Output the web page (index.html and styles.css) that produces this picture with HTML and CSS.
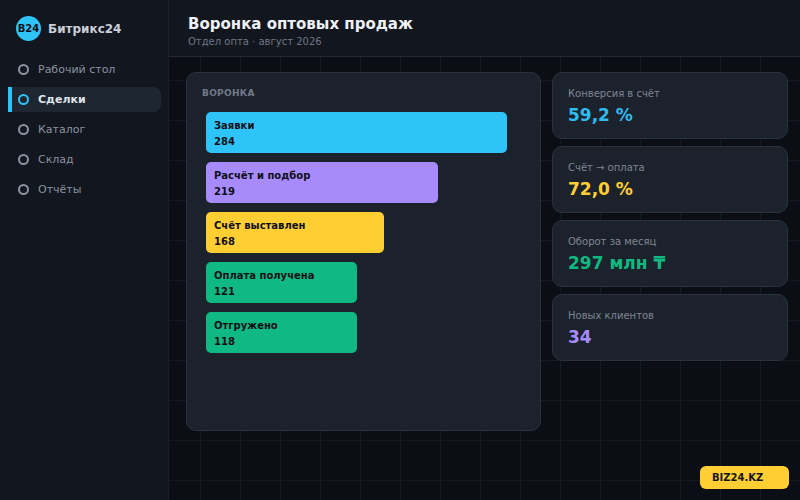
FILE: index.html
```html
<!DOCTYPE html>
<html lang="ru">
<head>
<meta charset="utf-8">
<title>Воронка оптовых продаж</title>
<link rel="stylesheet" href="styles.css">
</head>
<body>
<div class="app">
  <aside class="sidebar">
    <div class="brand"><span class="logo">B24</span><span class="brand-name">Битрикс24</span></div>
    <nav class="nav">
      <a class="nav-item"><i class="dot"></i>Рабочий стол</a>
      <a class="nav-item active"><i class="dot"></i>Сделки</a>
      <a class="nav-item"><i class="dot"></i>Каталог</a>
      <a class="nav-item"><i class="dot"></i>Склад</a>
      <a class="nav-item"><i class="dot"></i>Отчёты</a>
    </nav>
  </aside>
  <main class="main">
    <header class="header">
      <h1>Воронка оптовых продаж</h1>
      <p>Отдел опта · август 2026</p>
    </header>
    <div class="content">
      <section class="panel">
        <h2>ВОРОНКА</h2>
        <div class="bars">
          <div class="bar blue w1"><b>Заявки</b><b>284</b></div>
          <div class="bar violet w2"><b>Расчёт и подбор</b><b>219</b></div>
          <div class="bar yellow w3"><b>Счёт выставлен</b><b>168</b></div>
          <div class="bar green w4"><b>Оплата получена</b><b>121</b></div>
          <div class="bar green w4"><b>Отгружено</b><b>118</b></div>
        </div>
      </section>
      <section class="stats">
        <div class="stat"><span>Конверсия в счёт</span><strong class="c-blue">59,2 %</strong></div>
        <div class="stat"><span>Счёт → оплата</span><strong class="c-yellow">72,0 %</strong></div>
        <div class="stat"><span>Оборот за месяц</span><strong class="c-green">297 млн ₸</strong></div>
        <div class="stat"><span>Новых клиентов</span><strong class="c-violet">34</strong></div>
      </section>
    </div>
  </main>
</div>
<div class="badge">BIZ24.KZ</div>
</body>
</html>
```
FILE: styles.css
```css
* { box-sizing: border-box; }
html, body { margin: 0; height: 100%; }
body {
  width: 800px; height: 500px; overflow: hidden;
  font-family: "DejaVu Sans", sans-serif;
  background-color: #0b0e14;
  background-image:
    linear-gradient(#141922 1px, transparent 1px),
    linear-gradient(90deg, #141922 1px, transparent 1px);
  background-size: 40px 40px;
  color: #e6e9ef;
}
.app { display: flex; height: 500px; }
.sidebar {
  width: 169px; flex: none;
  background: #12161f;
  border-right: 1px solid #1a1f2a;
  padding: 16px 7px 0 8px;
}
.brand { display: flex; align-items: center; gap: 7px; height: 25px; margin-left: 8px; }
.logo {
  width: 25px; height: 25px; border-radius: 50%;
  background: #2ec4f8; color: #0b0e14;
  font-size: 10px; font-weight: 700;
  display: flex; align-items: center; justify-content: center;
}
.brand-name { font-size: 12px; font-weight: 700; color: #c9ced8; }
.nav { display: flex; flex-direction: column; gap: 5px; margin-top: 16px; }
.nav-item {
  height: 25px; display: flex; align-items: center; gap: 9px;
  padding-left: 6px;
  font-size: 11px; color: #8b92a0;
  border-radius: 0 8px 8px 0;
  border-left: 4px solid transparent;
}
.nav-item.active { background: #1e2632; border-left-color: #2ec4f8; color: #dfe3ea; font-weight: 700; }
.dot { width: 11px; height: 11px; border-radius: 50%; border: 2px solid #8b92a0; flex: none; }
.active .dot { border-color: #2ec4f8; }
.main { flex: 1; display: flex; flex-direction: column; min-width: 0; }
.header {
  height: 57px; flex: none; padding: 15px 0 0 19px;
  background: #12161f;
  border-bottom: 1px solid #242934;
}
h1 { margin: 0; font-size: 15px; line-height: 18px; font-weight: 700; color: #eef0f4; }
.header p { margin: 3px 0 0; font-size: 10px; line-height: 12px; color: #6f7684; }
.content { display: flex; gap: 11px; padding: 15px 0 0 17px; }
.panel {
  width: 355px; height: 359px;
  background: #1c222c; border: 1px solid #2b313d; border-radius: 10px;
  padding: 15px 15px;
}
h2 { margin: 0; font-size: 9px; line-height: 11px; font-weight: 700; letter-spacing: 0.3px; color: #737a88; }
.bars { display: flex; flex-direction: column; gap: 9px; margin: 13px 0 0 4px; }
.bar {
  height: 41px; border-radius: 5px; padding: 6px 8px; color: #0e1016;
  font-size: 10px; line-height: 16px;
  display: flex; flex-direction: column;
}
.blue { background: #2ec4f8; }
.violet { background: #a78bfa; }
.yellow { background: #ffce33; }
.green { background: #10b981; }
.w1 { width: 301px; }
.w2 { width: 232px; }
.w3 { width: 178px; }
.w4 { width: 151px; }
.stats { width: 236px; display: flex; flex-direction: column; gap: 7px; }
.stat {
  height: 67px; background: #1c222c; border: 1px solid #2b313d; border-radius: 10px;
  padding: 15px 15px; display: flex; flex-direction: column;
}
.stat span { font-size: 10px; line-height: 12px; color: #7f8693; }
.stat strong { font-size: 17px; line-height: 20px; margin-top: 5px; }
.c-blue { color: #2ebbee; }
.c-yellow { color: #ffce33; }
.c-green { color: #10b981; }
.c-violet { color: #a78bfa; }
.badge {
  position: absolute; left: 700px; top: 466px; width: 89px; height: 23px;
  background: #ffce33; color: #14161c; border-radius: 6px;
  font-size: 10px; font-weight: 700; line-height: 23px; padding-left: 12px;
}
```
